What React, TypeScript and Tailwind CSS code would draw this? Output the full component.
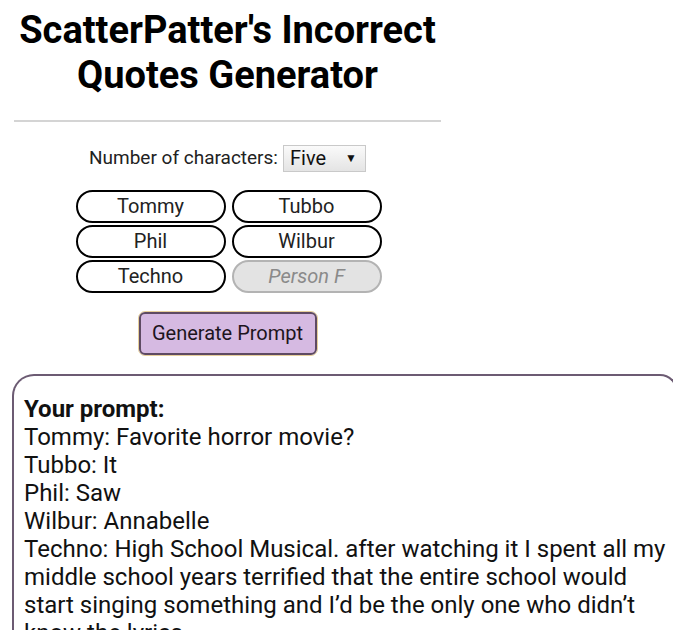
import { useState } from "react";

const names = ["Tommy", "Tubbo", "Phil", "Wilbur", "Techno", ""];
const placeholders = ["Person A", "Person B", "Person C", "Person D", "Person E", "Person F"];

const lines = [
  "Tommy: Favorite horror movie?",
  "Tubbo: It",
  "Phil: Saw",
  "Wilbur: Annabelle",
  "Techno: High School Musical. after watching it I spent all my middle school years terrified that the entire school would start singing something and I\u2019d be the only one who didn\u2019t know the lyrics.",
];

export default function App() {
  const [count] = useState(5);

  return (
    <div
      className="min-h-screen w-[673px] overflow-hidden bg-white text-[#111]"
      style={{ fontFamily: "Roboto, 'Liberation Sans', sans-serif" }}
    >
      <div className="w-[455px] pt-2">
        <h1 className="text-center text-[38px] font-bold leading-[45px] text-black">
          ScatterPatter's Incorrect
          <br />
          Quotes Generator
        </h1>
        <hr className="mx-[14px] mt-[22px] border-t-2 border-[#d4d4d4]" />

        <div className="mt-[22px] flex items-center justify-center gap-[5px] text-[19px] text-[#222]">
          <span>Number of characters:</span>
          <div className="flex h-[27px] w-[83px] items-center justify-between border border-[#c9c9c9] bg-gradient-to-b from-[#fafafa] to-[#e4e4e4] pl-[6px] pr-[8px] text-[20px] text-[#111]">
            <span>Five</span>
            <span className="text-[12px]">▼</span>
          </div>
        </div>

        <div className="mx-auto mt-[17px] grid w-[306px] translate-x-[1px] grid-cols-2 gap-x-[6px] gap-y-[2px]">
          {names.map((n, i) => {
            const off = i >= count;
            return (
              <div
                key={i}
                className={
                  off
                    ? "flex h-[33px] items-center justify-center rounded-full border-2 border-[#b3b3b3] bg-[#e3e3e3] text-[20px] italic text-[#8a8a8a]"
                    : "flex h-[33px] items-center justify-center rounded-full border-2 border-black bg-white text-[20px] text-[#222]"
                }
              >
                {n || placeholders[i]}
              </div>
            );
          })}
        </div>

        <div className="mt-[18px] flex justify-center">
          <div className="rounded-[7px] border border-[#e6cf9a]">
            <button className="h-[43px] w-[178px] rounded-[6px] border-2 border-[#5e4a63] bg-[#d6bae2] text-[20px] text-[#1d1420]">
              Generate Prompt
            </button>
          </div>
        </div>
      </div>

      <div className="ml-[12px] mt-[18px] w-[666px] rounded-tl-[22px] rounded-tr-[18px] border-2 border-b-0 border-[#6c5b73] pb-6 pl-[10px] pr-0 pt-[19px] text-[24px] leading-[28px] text-[#111]">
        <div className="font-bold">Your prompt:</div>
        {lines.map((l, i) => (
          <div key={i}>{l}</div>
        ))}
      </div>
    </div>
  );
}
